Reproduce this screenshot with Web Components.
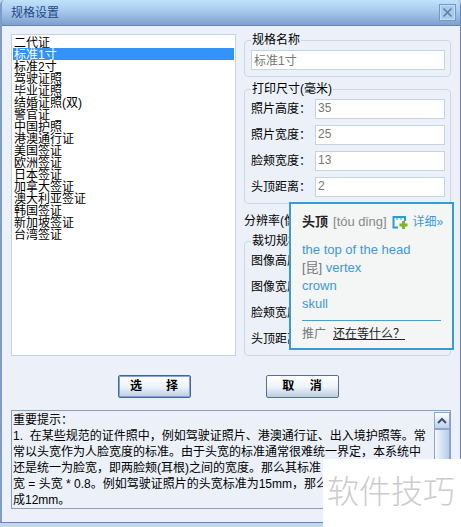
<!DOCTYPE html>
<html lang="zh-CN">
<head>
<meta charset="utf-8">
<title>规格设置</title>
<style>
    body{
        margin: 0;
        font: 12px/16px "Liberation Sans", "Noto Sans CJK SC", sans-serif;
        color: #000;
        background: #c3d7ef;
    }
</style>
</head>
<body>
<spec-dialog title-text="规格设置">
    <spec-list slot="list" items="二代证,标准1寸,标准2寸,驾驶证照,毕业证照,结婚证照(双),警官证,中国护照,港澳通行证,美国签证,欧洲签证,日本签证,加拿大签证,澳大利亚签证,韩国签证,新加坡签证,台湾签证" selected="标准1寸"></spec-list>

    <spec-group slot="form" name="规格名称">
        <spec-field value="标准1寸"></spec-field>
    </spec-group>
    <spec-group slot="form" name="打印尺寸(毫米)">
        <spec-field label="照片高度：" value="35"></spec-field>
        <spec-field label="照片宽度：" value="25"></spec-field>
        <spec-field label="脸颊宽度：" value="13"></spec-field>
        <spec-field label="头顶距离：" value="2"></spec-field>
    </spec-group>
    <div slot="form">分辨率(像</div>
    <spec-group slot="form" name="裁切规格">
        <spec-field label="图像高度"></spec-field>
        <spec-field label="图像宽度"></spec-field>
        <spec-field label="脸颊宽度"></spec-field>
        <spec-field label="头顶距离"></spec-field>
    </spec-group>

    <spec-button slot="buttons" default>选　　择</spec-button>
    <spec-button slot="buttons">取　 消</spec-button>

    <spec-tips slot="tips">
        <div>重要提示：</div>
        <div>1.  在某些规范的证件照中，例如驾驶证照片、港澳通行证、出入境护照等。常</div>
        <div>常以头宽作为人脸宽度的标准。由于头宽的标准通常很难统一界定，本系统中</div>
        <div>还是统一为脸宽，即两脸颊(耳根)之间的宽度。那么其标准</div>
        <div>宽 = 头宽 * 0.8。例如驾驶证照片的头宽标准为15mm，那么</div>
        <div>成12mm。</div>
    </spec-tips>
</spec-dialog>

<dict-popup word="头顶" pinyin="[tóu dǐng]">
    <div>the top of the head</div>
    <div><span style="color:#777">[昆]</span> vertex</div>
    <div>crown</div>
    <div>skull</div>
</dict-popup>
<site-mark>软件技巧</site-mark>

<script>
class SpecDialog extends HTMLElement {
    constructor(){
        super();
        const shadow = this.attachShadow({ mode: 'open' });
        shadow.innerHTML = `
        <style>
            :host{
                display: block;
                background: #ecf1f9;
                border: 1px solid #6685b5;
                border-left: 2px solid #7e9cca;
                border-top: 0;
                border-radius: 5px 5px 0 0;
                overflow: hidden;
            }
            header{
                display: flex;
                align-items: center;
                justify-content: space-between;
                height: 25px;
                padding: 0 4px 0 9px;
                background: linear-gradient(#c0e2fa, #a9cdf0 40%, #7f9fce);
                border-bottom: 1px solid #6683b2;
            }
            h1{
                margin: 0;
                font-size: 12px;
                font-weight: normal;
                color: #1f4886;
            }
            header button{
                width: 17px;
                height: 17px;
                padding: 0;
                border: 1px solid #6f9ac6;
                background: #a9cbea;
                box-shadow: inset 0 0 0 1px #c5def4;
            }
            header svg{
                display: block;
                margin: auto;
            }
            main{
                padding: 8px 9px 13px 9px;
            }
            .top{
                display: grid;
                grid-template-columns: minmax(0, 225fr) minmax(0, 207fr);
                gap: 8px;
            }
            .form{
                display: flex;
                flex-direction: column;
            }
            .form ::slotted(div){
                margin: 9px 0 6px 0;
                line-height: 16px;
                white-space: nowrap;
            }
            .form ::slotted(spec-group:first-of-type){
                margin-bottom: 6px;
            }
            .buttons{
                display: flex;
                justify-content: center;
                gap: 75px;
                padding: 19px 6px 12px 0;
            }
        </style>
        <header>
            <h1></h1>
            <button type="button" aria-label="关闭">
                <svg width="11" height="11" viewBox="0 0 11 11"><path d="M1.5 1.5 L9.5 9.5 M9.5 1.5 L1.5 9.5" stroke="#5f7fa8" stroke-width="1.7"/></svg>
            </button>
        </header>
        <main>
            <div class="top">
                <slot name="list"></slot>
                <div class="form"><slot name="form"></slot></div>
            </div>
            <div class="buttons"><slot name="buttons"></slot></div>
            <slot name="tips"></slot>
        </main>
        `;
        shadow.querySelector("h1").textContent = this.getAttribute("title-text");
    }
}

class SpecList extends HTMLElement {
    constructor(){
        super();
        const shadow = this.attachShadow({ mode: 'open' });
        shadow.innerHTML = `
        <style>
            :host{
                display: grid;
                min-width: 0;
            }
            select{
                width: 100%;
                height: 100%;
                padding: 1px;
                border: 1px solid #c5d3e3;
                border-radius: 0;
                background: #fff;
                font: inherit;
                outline: none;
                overflow: hidden;
            }
            option{
                display: flex;
                align-items: center;
                box-sizing: border-box;
                min-height: 12px;
                height: 12px;
                padding: 0 1px 2px 1px;
                line-height: 12px;
                color: #000;
            }
            option:checked{
                color: #fff;
                background: #3393f8 linear-gradient(#3393f8, #3393f8);
            }
        </style>
        <select size="17" aria-label="规格"></select>
        `;
        const select = shadow.querySelector("select");
        for (const item of this.getAttribute("items").split(",")) {
            const selected = item === this.getAttribute("selected");
            select.add(new Option(item, item, selected, selected));
        }
    }
}

class SpecGroup extends HTMLElement {
    constructor(){
        super();
        const shadow = this.attachShadow({ mode: 'open' });
        shadow.innerHTML = `
        <style>
            :host{
                display: block;
            }
            fieldset{
                display: block;
                min-width: 0;
                margin: 0;
                padding: 4px 5px 6px 6px;
                border: 1px solid #cbd7e6;
                border-radius: 4px;
            }
            legend{
                padding: 0 1px;
                line-height: 12px;
            }
            .rows{
                display: grid;
                grid-template-columns: minmax(0, 1fr);
                gap: 6px;
            }
        </style>
        <fieldset>
            <legend></legend>
            <div class="rows"><slot></slot></div>
        </fieldset>
        `;
        shadow.querySelector("legend").textContent = this.getAttribute("name");
    }
}

class SpecField extends HTMLElement {
    constructor(){
        super();
        const shadow = this.attachShadow({ mode: 'open' });
        shadow.innerHTML = `
        <style>
            :host{
                display: flex;
                align-items: center;
            }
            label{
                flex: none;
                width: 64px;
                white-space: nowrap;
            }
            input{
                flex: 1;
                min-width: 0;
                box-sizing: border-box;
                height: 20px;
                padding: 0 2px 2px 2px;
                border: 1px solid #c5d3e3;
                background: #fff;
                font: inherit;
                color: #777;
            }
        </style>
        <label for="valor"></label>
        <input id="valor" type="text">
        `;
        const label = shadow.querySelector("label");
        const input = shadow.querySelector("input");
        input.value = this.getAttribute("value") || "";
        if (this.hasAttribute("label")) {
            label.textContent = this.getAttribute("label");
        } else {
            label.remove();
            input.setAttribute("aria-label", "规格名称");
        }
    }
}

class SpecButton extends HTMLElement {
    constructor(){
        super();
        const shadow = this.attachShadow({ mode: 'open' });
        shadow.innerHTML = `
        <style>
            :host{
                display: block;
            }
            button{
                display: block;
                width: 73px;
                height: 23px;
                padding: 0 0 2px 0;
                border: 1px solid #5d7088;
                border-radius: 2px;
                background: linear-gradient(#fff, #eef4fb 50%, #bccde2);
                font: bold 12px/16px "Liberation Sans", "Noto Sans CJK SC", sans-serif;
                color: #000;
                white-space: pre;
            }
            :host([default]) button{
                border-color: #46679c;
                box-shadow: inset 0 0 0 1px #7ea3de;
            }
        </style>
        <button type="button"><slot></slot></button>
        `;
    }
}

class SpecTips extends HTMLElement {
    constructor(){
        super();
        const shadow = this.attachShadow({ mode: 'open' });
        shadow.innerHTML = `
        <style>
            :host{
                display: flex;
                border: 1px solid #8d9fbd;
            }
            .text{
                flex: 1;
                min-width: 0;
                padding: 1px 1px 0 1px;
                overflow: hidden;
            }
            ::slotted(div){
                white-space: pre;
            }
            .bar{
                flex: none;
                display: flex;
                flex-direction: column;
                width: 16px;
                margin-top: 1px;
                background: #f2f6fb;
            }
            .bar button{
                box-sizing: border-box;
                height: 17px;
                padding: 0;
                border: 1px solid #8fa6c8;
                background: linear-gradient(#fff, #bdd2ea);
            }
            .bar svg{
                display: block;
                margin: auto;
            }
            .thumb{
                flex: 1;
                border: 1px solid #8fa6c8;
                background: linear-gradient(90deg, #f4f9ff, #b4cceb);
            }
        </style>
        <div class="text"><slot></slot></div>
        <div class="bar">
            <button type="button" aria-label="向上">
                <svg width="10" height="7" viewBox="0 0 10 7"><path d="M1 6 L5 2 L9 6" fill="none" stroke="#3d516e" stroke-width="2"/></svg>
            </button>
            <div class="thumb"></div>
        </div>
        `;
    }
}

class DictPopup extends HTMLElement {
    constructor(){
        super();
        const shadow = this.attachShadow({ mode: 'open' });
        shadow.innerHTML = `
        <style>
            /* floats over the dialog */
            :host{
                position: absolute;
                top: 202px;
                right: 7px;
                box-sizing: border-box;
                width: 165px;
                padding: 9px 11px 5px 11px;
                border: 2px solid #389bd9;
                background: #f4f5f5;
                font-size: 13px;
                line-height: 18px;
                color: #3d9ad6;
                white-space: nowrap;
            }
            .head{
                display: flex;
                align-items: center;
                gap: 5px;
                margin-bottom: 10px;
            }
            b{
                font-size: 13px;
                color: #222;
            }
            .pinyin{
                color: #888;
            }
            .head a{
                font-size: 12px;
                color: #3d9ad6;
                text-decoration: none;
            }
            svg{
                flex: none;
            }
            .foot{
                display: flex;
                gap: 7px;
                margin-top: 7px;
                padding-top: 4px;
                border-top: 1px solid #4ba0c8;
                font-size: 12px;
            }
            .foot span{
                color: #777;
            }
            .foot a{
                color: #222;
            }
        </style>
        <div class="head">
            <b></b>
            <span class="pinyin"></span>
            <svg width="16" height="15" viewBox="0 0 16 15">
                <path d="M6 12.5 H1.5 V2 H13 V6" fill="none" stroke="#2f9ccc" stroke-width="2"/>
                <path d="M5 2 V5 M9 2 V5" stroke="#2f9ccc" stroke-width="1"/>
                <path d="M11.5 6 V14 M7.5 10 H15.5" stroke="#7db52b" stroke-width="3"/>
            </svg>
            <a href="#">详细»</a>
        </div>
        <slot></slot>
        <div class="foot"><span>推广</span><a href="#">还在等什么？</a></div>
        `;
        shadow.querySelector("b").textContent = this.getAttribute("word");
        shadow.querySelector(".pinyin").textContent = this.getAttribute("pinyin");
    }
}

class SiteMark extends HTMLElement {
    constructor(){
        super();
        const shadow = this.attachShadow({ mode: 'open' });
        shadow.innerHTML = `
        <style>
            /* corner stamp over the dialog */
            :host{
                position: absolute;
                top: 459px;
                right: 0;
                box-sizing: border-box;
                width: 138px;
                height: 68px;
                padding-left: 4px;
                background: #fff;
                font-size: 32px;
                font-weight: 300;
                line-height: 66px;
                color: #ccc;
                white-space: nowrap;
            }
        </style>
        <slot></slot>
        `;
    }
}

customElements.define("spec-dialog", SpecDialog);
customElements.define("spec-list", SpecList);
customElements.define("spec-group", SpecGroup);
customElements.define("spec-field", SpecField);
customElements.define("spec-button", SpecButton);
customElements.define("spec-tips", SpecTips);
customElements.define("dict-popup", DictPopup);
customElements.define("site-mark", SiteMark);
</script>
</body>
</html>
